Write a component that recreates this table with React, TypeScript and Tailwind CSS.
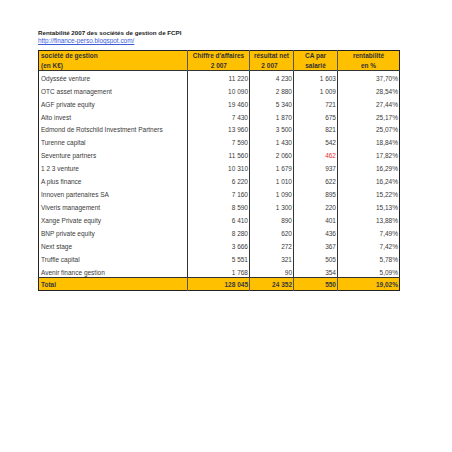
const rows: [string, string, string, string, string][] = [
  ["Odyssée venture", "11 220", "4 230", "1 603", "37,70%"],
  ["OTC asset management", "10 090", "2 880", "1 009", "28,54%"],
  ["AGF private equity", "19 460", "5 340", "721", "27,44%"],
  ["Alto invest", "7 430", "1 870", "675", "25,17%"],
  ["Edmond de Rotschild Investment Partners", "13 960", "3 500", "821", "25,07%"],
  ["Turenne capital", "7 590", "1 430", "542", "18,84%"],
  ["Seventure partners", "11 560", "2 060", "462", "17,82%"],
  ["1 2 3 venture", "10 310", "1 679", "937", "16,29%"],
  ["A plus finance", "6 220", "1 010", "622", "16,24%"],
  ["Innoven partenaires SA", "7 160", "1 090", "895", "15,22%"],
  ["Viveris management", "8 590", "1 300", "220", "15,13%"],
  ["Xange Private equity", "6 410", "890", "401", "13,88%"],
  ["BNP private equity", "8 280", "620", "436", "7,49%"],
  ["Next stage", "3 666", "272", "367", "7,42%"],
  ["Truffle capital", "5 551", "321", "505", "5,78%"],
  ["Avenir finance gestion", "1 768", "90", "354", "5,09%"],
];

export default function App() {
  return (
    <div className="w-[452px] h-[452px] bg-white text-[#3a3a3a] font-['Liberation_Sans',Arial,sans-serif]">
      <div className="pt-[29px] pl-[38px]">
        <div className="text-[6.2px] leading-[8px] font-bold text-[#222]">
          Rentabilité 2007 des sociétés de gestion de FCPI
        </div>
        <a className="block text-[6.4px] leading-[8px] text-[#3b5bdb] underline" href="#">
          http://finance-perso.blogspot.com/
        </a>
        <table className="mt-[5px] border-collapse border border-[#222] text-[6.5px] leading-none table-fixed">
          <colgroup>
            <col className="w-[149px]" />
            <col className="w-[62px]" />
            <col className="w-[44px]" />
            <col className="w-[44px]" />
            <col className="w-[62px]" />
          </colgroup>
          <thead className="bg-[#ffc000] text-[#333]">
            <tr>
              <th className="h-[10px] p-0 align-middle text-left font-bold px-[2px] border-r border-[#555]">société de gestion</th>
              <th className="h-[10px] p-0 align-middle font-bold border-r border-[#555]">Chiffre d'affaires</th>
              <th className="h-[10px] p-0 align-middle font-bold border-r border-[#555]">résultat net</th>
              <th className="h-[10px] p-0 align-middle font-bold border-r border-[#555]">CA par</th>
              <th className="h-[10px] p-0 align-middle font-bold">rentabilité</th>
            </tr>
            <tr className="border-b border-[#333]">
              <th className="h-[10px] p-0 pt-[2px] align-middle text-left font-bold px-[2px] border-r border-[#555]">(en K€)</th>
              <th className="h-[10px] p-0 pt-[2px] align-middle font-bold text-right pr-[22px] border-r border-[#555]">2 007</th>
              <th className="h-[10px] p-0 pt-[2px] align-middle font-bold text-center pr-[4px] border-r border-[#555]">2 007</th>
              <th className="h-[10px] p-0 pt-[2px] align-middle font-bold text-center border-r border-[#555]">salarié</th>
              <th className="h-[10px] p-0 pt-[2px] align-middle font-bold text-center">en %</th>
            </tr>
          </thead>
          <tbody>
            {rows.map((r) => (
              <tr key={r[0]}>
                <td className="h-[12.94px] p-0 px-[2px] pt-[4px] border-r border-[#333]">{r[0]}</td>
                <td className="h-[12.94px] p-0 text-right pr-[1px] pt-[4px] border-r border-[#333]">{r[1]}</td>
                <td className="h-[12.94px] p-0 text-right pr-[1px] pt-[4px] border-r border-[#333]">{r[2]}</td>
                <td className={"h-[12.94px] p-0 text-right pr-[1px] pt-[4px] border-r border-[#333] " + (r[3] === "462" ? "text-[#e03131]" : "")}>{r[3]}</td>
                <td className="h-[12.94px] p-0 text-right pr-[1px] pt-[4px]">{r[4]}</td>
              </tr>
            ))}
            <tr className="bg-[#ffc000] font-bold border-t border-[#333]">
              <td className="h-[13px] p-0 px-[2px] pt-[3px] border-r border-[#555]">Total</td>
              <td className="h-[13px] p-0 text-right pr-[1px] pt-[3px] border-r border-[#555]">128 045</td>
              <td className="h-[13px] p-0 text-right pr-[1px] pt-[3px] border-r border-[#555]">24 352</td>
              <td className="h-[13px] p-0 text-right pr-[1px] pt-[3px] border-r border-[#555]">550</td>
              <td className="h-[13px] p-0 text-right pr-[1px] pt-[3px]">19,02%</td>
            </tr>
          </tbody>
        </table>
      </div>
    </div>
  );
}
